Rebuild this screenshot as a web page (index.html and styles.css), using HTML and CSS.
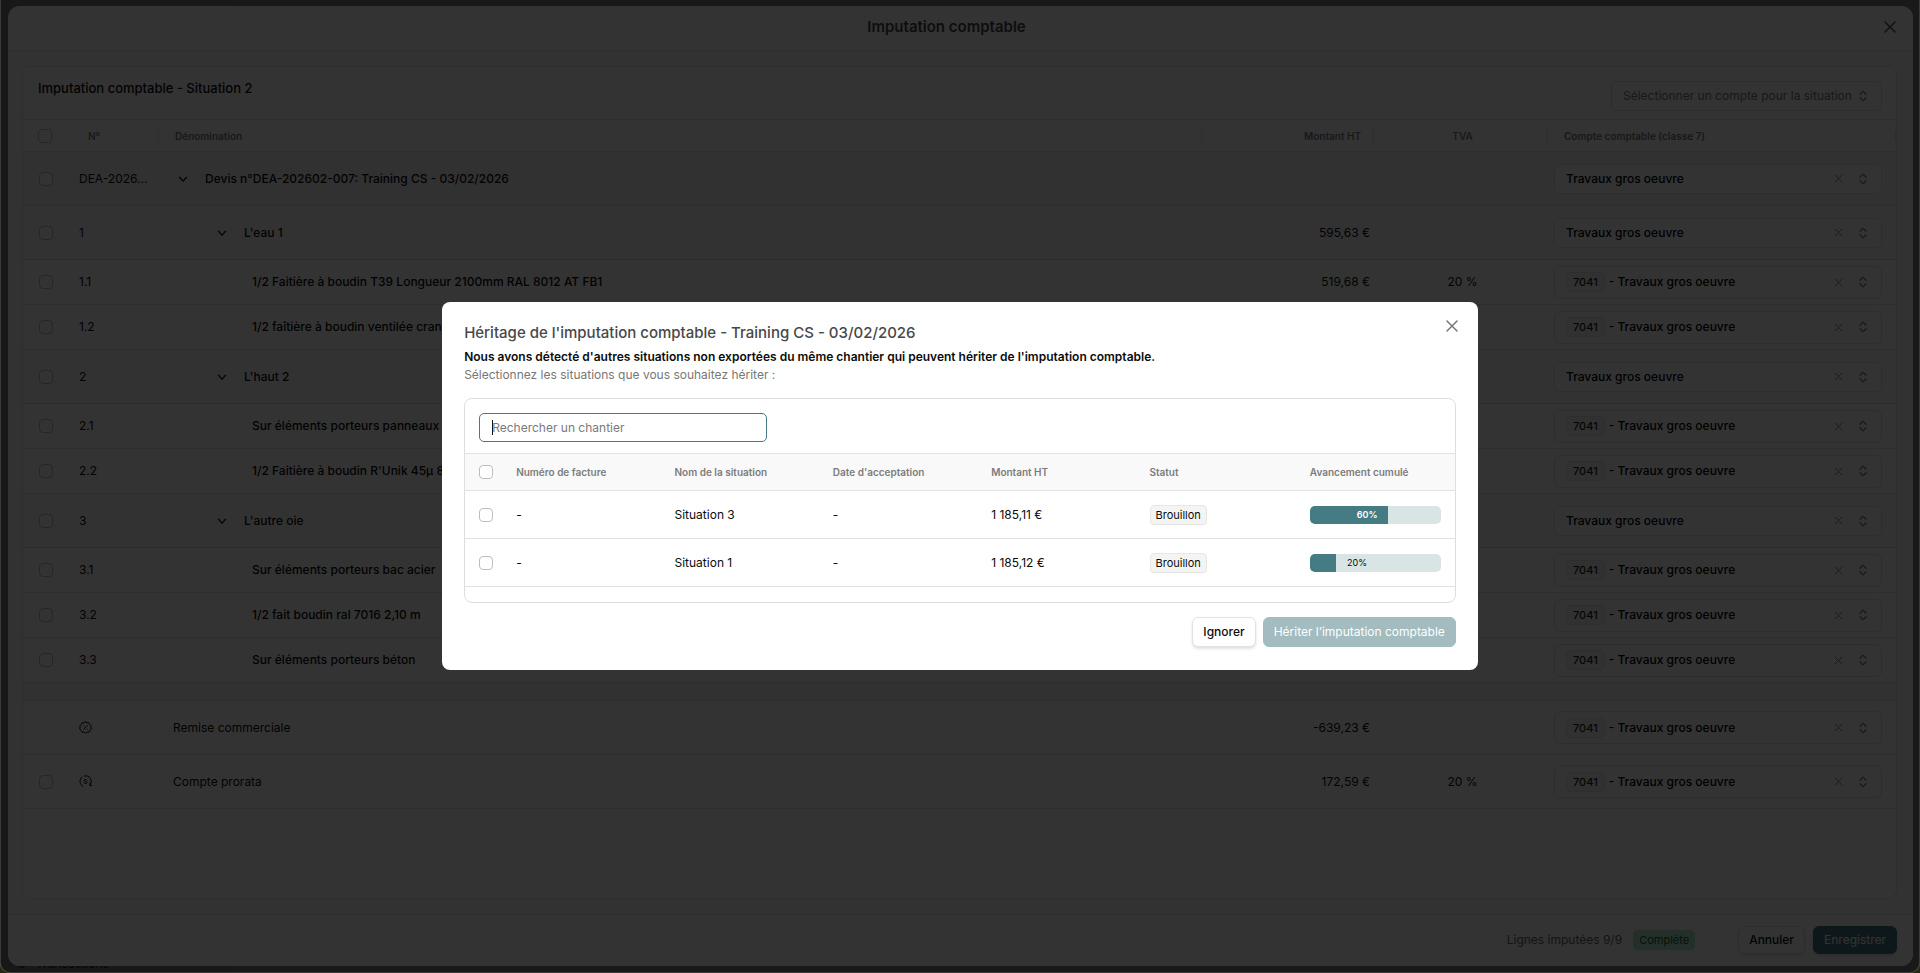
FILE: index.html
```html
<!DOCTYPE html>
<html lang="fr">
<head>
<meta charset="utf-8">
<title>Imputation comptable</title>
<link rel="stylesheet" href="styles.css">
</head>
<body>
<svg class="sprite" aria-hidden="true">
  <symbol id="i-close" viewBox="0 0 16 16"><path d="M3 3l10 10M13 3L3 13"/></symbol>
  <symbol id="i-down" viewBox="0 0 16 16"><path d="M4 6l4 4.500L12 6"/></symbol>
  <symbol id="i-sort" viewBox="0 0 16 16"><path d="M4.500 6L8 2.500 11.500 6M4.500 10L8 13.500 11.500 10"/></symbol>
  <symbol id="i-percent" viewBox="0 0 16 16"><path d="M8 1l2 1.200 2.300.1 1 2.100 1.800 1.500-.5 2.100.5 2.100-1.800 1.500-1 2.100-2.300.1L8 15l-2-1.200-2.300-.1-1-2.100L.9 10.100 1.400 8 .9 5.900l1.800-1.500 1-2.100L6 2.200zM10.200 5.800l-4.400 4.400M6 6h.1M10 10h.1"/></symbol>
  <symbol id="i-coin" viewBox="0 0 16 16"><path d="M5 14.200A6.900 6.900 0 0 1 3.500 2.700M6.500 1.300A6.900 6.900 0 0 1 13.500 12.500M13.500 10v3h2M9.900 6.200C9.200 5.200 6.200 5.200 6.200 6.800c0 1.600 3.700.8 3.700 2.500 0 1.500-3 1.500-3.900.3"/></symbol>
</svg>

<aside class="sidebar"><a class="sidebar-link" href="#"><span class="sidebar-icon">⇅</span>Transactions</a></aside>

<section class="sheet" aria-label="Imputation comptable">
  <header class="sheet-head">
    <h1>Imputation comptable</h1>
    <button class="icon-btn" aria-label="Fermer"><svg class="icon icon-lg"><use href="#i-close"/></svg></button>
  </header>
  <div class="sheet-body">
    <div class="card">
      <div class="card-head">
        <h2>Imputation comptable - Situation 2</h2>
        <div class="picker picker-all"><select aria-label="Compte pour la situation"><option>Sélectionner un compte pour la situation</option></select><svg class="icon"><use href="#i-sort"/></svg></div>
      </div>
      <table class="lines">
        <colgroup><col class="c-check"><col class="c-num"><col><col class="c-amount"><col class="c-tva"><col class="c-account"></colgroup>
        <thead>
          <tr><th class="check"><input type="checkbox" aria-label="Tout sélectionner"></th><th class="sep num">N°</th><th class="sep name">Dénomination</th><th class="sep amount">Montant HT</th><th class="sep tva">TVA</th><th class="sep account">Compte comptable (classe 7)</th></tr>
        </thead>
        <tbody>
          <tr class="quote"><td class="check"><input type="checkbox" aria-label="Devis"></td><td>DEA-2026...</td><td class="l0"><div class="node"><button class="toggle" aria-label="Replier"><svg class="icon"><use href="#i-down"/></svg></button>Devis n°DEA-202602-007: Training CS - 03/02/2026</div></td><td class="amount"></td><td class="tva"></td><td class="account"><div class="picker"><select aria-label="Compte"><option>Travaux gros oeuvre</option></select><button class="clear" aria-label="Effacer"><svg class="icon"><use href="#i-close"/></svg></button><svg class="icon"><use href="#i-sort"/></svg></div></td></tr>
          <tr class="group"><td class="check"><input type="checkbox" aria-label="1"></td><td>1</td><td class="l1"><div class="node"><button class="toggle" aria-label="Replier"><svg class="icon"><use href="#i-down"/></svg></button>L'eau 1</div></td><td class="amount">595,63 €</td><td class="tva"></td><td class="account"><div class="picker"><select aria-label="Compte"><option>Travaux gros oeuvre</option></select><button class="clear" aria-label="Effacer"><svg class="icon"><use href="#i-close"/></svg></button><svg class="icon"><use href="#i-sort"/></svg></div></td></tr>
          <tr><td class="check"><input type="checkbox" aria-label="1.1"></td><td>1.1</td><td class="l2">1/2 Faitière à boudin T39 Longueur 2100mm RAL 8012 AT FB1</td><td class="amount">519,68 €</td><td class="tva">20 %</td><td class="account"><div class="picker coded"><span class="code">7041</span><select aria-label="Compte"><option>- Travaux gros oeuvre</option></select><button class="clear" aria-label="Effacer"><svg class="icon"><use href="#i-close"/></svg></button><svg class="icon"><use href="#i-sort"/></svg></div></td></tr>
          <tr><td class="check"><input type="checkbox" aria-label="1.2"></td><td>1.2</td><td class="l2">1/2 faîtière à boudin ventilée crantée</td><td class="amount"></td><td class="tva"></td><td class="account"><div class="picker coded"><span class="code">7041</span><select aria-label="Compte"><option>- Travaux gros oeuvre</option></select><button class="clear" aria-label="Effacer"><svg class="icon"><use href="#i-close"/></svg></button><svg class="icon"><use href="#i-sort"/></svg></div></td></tr>
          <tr class="group"><td class="check"><input type="checkbox" aria-label="2"></td><td>2</td><td class="l1"><div class="node"><button class="toggle" aria-label="Replier"><svg class="icon"><use href="#i-down"/></svg></button>L'haut 2</div></td><td class="amount"></td><td class="tva"></td><td class="account"><div class="picker"><select aria-label="Compte"><option>Travaux gros oeuvre</option></select><button class="clear" aria-label="Effacer"><svg class="icon"><use href="#i-close"/></svg></button><svg class="icon"><use href="#i-sort"/></svg></div></td></tr>
          <tr><td class="check"><input type="checkbox" aria-label="2.1"></td><td>2.1</td><td class="l2">Sur éléments porteurs panneaux bois</td><td class="amount"></td><td class="tva"></td><td class="account"><div class="picker coded"><span class="code">7041</span><select aria-label="Compte"><option>- Travaux gros oeuvre</option></select><button class="clear" aria-label="Effacer"><svg class="icon"><use href="#i-close"/></svg></button><svg class="icon"><use href="#i-sort"/></svg></div></td></tr>
          <tr><td class="check"><input type="checkbox" aria-label="2.2"></td><td>2.2</td><td class="l2">1/2 Faitière à boudin R'Unik 45µ 8012</td><td class="amount"></td><td class="tva"></td><td class="account"><div class="picker coded"><span class="code">7041</span><select aria-label="Compte"><option>- Travaux gros oeuvre</option></select><button class="clear" aria-label="Effacer"><svg class="icon"><use href="#i-close"/></svg></button><svg class="icon"><use href="#i-sort"/></svg></div></td></tr>
          <tr class="group"><td class="check"><input type="checkbox" aria-label="3"></td><td>3</td><td class="l1"><div class="node"><button class="toggle" aria-label="Replier"><svg class="icon"><use href="#i-down"/></svg></button>L'autre oie</div></td><td class="amount"></td><td class="tva"></td><td class="account"><div class="picker"><select aria-label="Compte"><option>Travaux gros oeuvre</option></select><button class="clear" aria-label="Effacer"><svg class="icon"><use href="#i-close"/></svg></button><svg class="icon"><use href="#i-sort"/></svg></div></td></tr>
          <tr><td class="check"><input type="checkbox" aria-label="3.1"></td><td>3.1</td><td class="l2">Sur éléments porteurs bac acier</td><td class="amount"></td><td class="tva"></td><td class="account"><div class="picker coded"><span class="code">7041</span><select aria-label="Compte"><option>- Travaux gros oeuvre</option></select><button class="clear" aria-label="Effacer"><svg class="icon"><use href="#i-close"/></svg></button><svg class="icon"><use href="#i-sort"/></svg></div></td></tr>
          <tr><td class="check"><input type="checkbox" aria-label="3.2"></td><td>3.2</td><td class="l2">1/2 fait boudin ral 7016 2,10 m</td><td class="amount"></td><td class="tva"></td><td class="account"><div class="picker coded"><span class="code">7041</span><select aria-label="Compte"><option>- Travaux gros oeuvre</option></select><button class="clear" aria-label="Effacer"><svg class="icon"><use href="#i-close"/></svg></button><svg class="icon"><use href="#i-sort"/></svg></div></td></tr>
          <tr><td class="check"><input type="checkbox" aria-label="3.3"></td><td>3.3</td><td class="l2">Sur éléments porteurs béton</td><td class="amount"></td><td class="tva"></td><td class="account"><div class="picker coded"><span class="code">7041</span><select aria-label="Compte"><option>- Travaux gros oeuvre</option></select><button class="clear" aria-label="Effacer"><svg class="icon"><use href="#i-close"/></svg></button><svg class="icon"><use href="#i-sort"/></svg></div></td></tr>
          <tr class="gap"><td colspan="6"></td></tr>
          <tr class="extra"><td class="check"></td><td><svg class="icon icon-md"><use href="#i-percent"/></svg></td><td class="plain">Remise commerciale</td><td class="amount">-639,23 €</td><td class="tva"></td><td class="account"><div class="picker coded"><span class="code">7041</span><select aria-label="Compte"><option>- Travaux gros oeuvre</option></select><button class="clear" aria-label="Effacer"><svg class="icon"><use href="#i-close"/></svg></button><svg class="icon"><use href="#i-sort"/></svg></div></td></tr>
          <tr class="extra"><td class="check"><input type="checkbox" aria-label="Compte prorata"></td><td><svg class="icon icon-md"><use href="#i-coin"/></svg></td><td class="plain">Compte prorata</td><td class="amount">172,59 €</td><td class="tva">20 %</td><td class="account"><div class="picker coded"><span class="code">7041</span><select aria-label="Compte"><option>- Travaux gros oeuvre</option></select><button class="clear" aria-label="Effacer"><svg class="icon"><use href="#i-close"/></svg></button><svg class="icon"><use href="#i-sort"/></svg></div></td></tr>
        </tbody>
      </table>
    </div>
  </div>
  <footer class="sheet-foot">
    <span class="count">Lignes imputées 9/9</span>
    <span class="badge badge-ok">Complète</span>
    <div class="actions">
      <button class="btn">Annuler</button>
      <button class="btn btn-primary">Enregistrer</button>
    </div>
  </footer>
</section>

<div class="overlay">
  <section class="modal" role="dialog" aria-labelledby="modal-title">
    <header class="modal-head">
      <div>
        <h2 id="modal-title">Héritage de l'imputation comptable - Training CS - 03/02/2026</h2>
        <p class="lead">Nous avons détecté d'autres situations non exportées du même chantier qui peuvent hériter de l'imputation comptable.</p>
        <p class="hint">Sélectionnez les situations que vous souhaitez hériter :</p>
      </div>
      <button class="icon-btn" aria-label="Fermer"><svg class="icon icon-lg"><use href="#i-close"/></svg></button>
    </header>
    <div class="panel">
      <div class="search"><input type="text" placeholder="Rechercher un chantier" aria-label="Rechercher un chantier" autofocus></div>
      <table class="situations">
        <colgroup><col class="s-check"><col class="s-col"><col class="s-col"><col class="s-col"><col class="s-col"><col class="s-col"><col></colgroup>
        <thead>
          <tr><th class="check"><input type="checkbox" aria-label="Tout sélectionner"></th><th>Numéro de facture</th><th>Nom de la situation</th><th>Date d'acceptation</th><th>Montant HT</th><th>Statut</th><th class="progress-cell">Avancement cumulé</th></tr>
        </thead>
        <tbody>
          <tr><td class="check"><input type="checkbox" aria-label="Situation 3"></td><td>-</td><td>Situation 3</td><td>-</td><td>1 185,11 €</td><td><span class="badge">Brouillon</span></td><td class="progress-cell"><div class="bar"><div class="fill" style="width:60%">60%</div></div></td></tr>
          <tr><td class="check"><input type="checkbox" aria-label="Situation 1"></td><td>-</td><td>Situation 1</td><td>-</td><td>1 185,12 €</td><td><span class="badge">Brouillon</span></td><td class="progress-cell"><div class="bar"><div class="fill" style="width:20%"></div><span class="bar-text">20%</span></div></td></tr>
        </tbody>
      </table>
    </div>
    <footer class="modal-foot">
      <button class="btn">Ignorer</button>
      <button class="btn btn-soft">Hériter l’imputation comptable</button>
    </footer>
  </section>
</div>
</body>
</html>
```

FILE: styles.css
```css
* { box-sizing: border-box; }

html { background: #26270f; }

body {
  margin: 0;
  min-height: 100vh;
  display: flex;
  background: #7d7d7d;
  border-radius: 0 0 10px 10px;
  color: #0c0c0c;
  font: 12px/18px Inter, "Liberation Sans", sans-serif;
}

h1, h2, p { margin: 0; }
button, input, select { font: inherit; color: inherit; margin: 0; }
button { cursor: pointer; }

.sprite { display: none; }

.icon {
  width: 14px;
  height: 14px;
  flex: none;
  fill: none;
  stroke: currentColor;
  stroke-width: 1.5;
  stroke-linecap: round;
  stroke-linejoin: round;
  display: block;
}
.icon-md { width: 13px; height: 13px; stroke-width: 1.2; }
.icon-lg { width: 16px; height: 16px; }

.icon-btn, .toggle, .clear {
  border: 0;
  background: none;
  padding: 0;
  display: flex;
}

/* App behind the sheet */
.sidebar {
  width: 232px;
  display: flex;
  align-items: flex-end;
  padding: 0 16px;
  background: #787878;
  border-radius: 0 0 0 10px;
}
.sidebar-link {
  display: flex;
  gap: 8px;
  color: #1c1c1c;
  text-decoration: none;
}
.sidebar-icon { width: 12px; }

/* Sheet */
.sheet {
  position: fixed;
  inset: 6px 7px 7px 8px;
  display: flex;
  flex-direction: column;
  background: #f8f8f8;
  border-radius: 12px;
  overflow: hidden;
}
.sheet-head {
  display: flex;
  align-items: center;
  gap: 12px;
  height: 45px;
  padding: 0 15px 3px;
  background: #fff;
  border-bottom: 1px solid #e4e4e4;
}
.sheet-head h1 {
  flex: 1;
  text-align: center;
  font-size: 15px;
  line-height: 24px;
  font-weight: 600;
  color: #484848;
}
.sheet-head .icon-btn { color: #555; }

.sheet-body {
  flex: 1;
  min-height: 0;
  padding: 15px 16px 15px 14px;
  display: flex;
}
.card {
  flex: 1;
  background: #fff;
  border: 1px solid #e4e4e4;
  border-radius: 8px;
  overflow: hidden;
}
.card-head {
  display: flex;
  justify-content: space-between;
  align-items: flex-start;
  height: 53px;
  padding: 12px 14px 0 15px;
  border-bottom: 1px solid #e4e4e4;
}
.card-head h2 {
  font-size: 13px;
  line-height: 18px;
  font-weight: 500;
}

.picker {
  display: flex;
  align-items: center;
  gap: 4px;
  height: 30px;
  padding: 0 11px;
  background: #fff;
  border: 1px solid #e2e2e2;
  border-radius: 6px;
  color: #777;
}
.picker.coded { height: 33px; }
.picker select {
  appearance: none;
  flex: 1;
  min-width: 0;
  border: 0;
  padding: 0;
  background: none;
  font-weight: 500;
  color: #000;
}
.picker .clear { margin-right: 8px; }
.picker .icon { stroke-width: 1.3; }
.picker .clear .icon { width: 11px; height: 11px; }
.picker-all select { color: #7a7a7a; font-weight: 400; }
.picker-all { margin-top: 2px; }
.code {
  padding: 0 6px;
  border: 1px solid #e4e4e4;
  border-radius: 5px;
  background: #f5f5f5;
  color: #1c1c1c;
  font-size: 11px;
  font-weight: 500;
}

input[type="checkbox"] {
  appearance: none;
  display: block;
  width: 14px;
  height: 14px;
  background: #fff;
  border: 1px solid #bdbdbd;
  border-radius: 4px;
}

table {
  width: 100%;
  border-collapse: separate;
  border-spacing: 0;
  table-layout: fixed;
}
th { text-align: left; font-size: 10px; font-weight: 600; color: #7c7c7c; }

.c-check { width: 48px; }
.c-num { width: 88px; }
.c-amount { width: 172px; }
.c-tva { width: 174px; }
.c-account { width: 348px; }

.lines th, .lines td {
  height: 45px;
  padding: 0 8px;
  border-bottom: 1px solid #e0e0e0;
}
.lines th { height: 32px; }
.lines td.check { padding-left: 16px; }
.lines th.check { padding-left: 15px; }
.lines .sep {
  background: linear-gradient(#e2e2e2, #e2e2e2) right center / 1px 12px no-repeat;
}
.lines .num { padding-left: 17px; }
.lines .name { padding-left: 16px; }
.lines .group td, .lines .quote td, .lines .extra td { height: 54px; }
.lines .quote td, .lines .gap td { background: #f5f5f5; }
.lines .group td { background: #fafafa; }
.lines .gap td { height: 18px; }
.lines td.amount { text-align: right; padding-right: 4px; }
.lines th.amount { text-align: right; padding-right: 13px; }
.lines .tva { text-align: center; padding: 0 6px 0 9px; }
.lines td.account { padding: 0 14px 0 6px; }
.lines th.account { padding-left: 16px; }
.node { display: flex; align-items: center; gap: 15px; }
.lines .l0 { padding-left: 17px; font-weight: 500; }
.lines .l1 { padding-left: 56px; font-weight: 500; }
.lines .l2 { padding-left: 93px; font-weight: 500; }
.lines .plain { padding-left: 14px; }

.sheet-foot {
  display: flex;
  align-items: center;
  justify-content: flex-end;
  gap: 11px;
  height: 52px;
  padding: 0 16px 2px;
  background: #fff;
  border-top: 1px solid #e4e4e4;
}
.count { color: #666; }
.badge {
  display: inline-block;
  padding: 0 5px;
  border: 1px solid #e6e6e4;
  border-radius: 4px;
  background: #f4f4f3;
  font-size: 11px;
}
.badge-ok { background: #b9ecca; border-color: #b9ecca; color: #12652f; }
.actions { display: flex; gap: 8px; margin-left: 32px; }

.btn {
  height: 30px;
  padding: 0 10px;
  border: 1px solid #e2e2e2;
  border-radius: 6px;
  background: #fff;
  box-shadow: 0 2px 3px rgba(0, 0, 0, .12);
  font-weight: 500;
}
.sheet-foot .btn { height: 28px; }
.btn-primary, .btn-soft { color: #fff; font-weight: 400; }
.btn-primary { background: #457b82; border-color: #457b82; }
.btn-soft { background: #a2bcc0; border-color: #a2bcc0; box-shadow: none; }

/* Dialog */
.overlay {
  position: fixed;
  inset: 0;
  display: flex;
  align-items: center;
  justify-content: center;
  background: rgba(0, 0, 0, .8);
  border: 1px solid rgba(255, 255, 255, .15);
  border-top: 0;
  border-radius: 0 0 10px 10px;
}
.modal {
  width: 54%;
  padding: 20px 22px 23px;
  border-radius: 8px;
  background: #fff;
}
.modal-head {
  display: flex;
  justify-content: space-between;
  align-items: flex-start;
}
.modal-head h2 {
  font-size: 15px;
  line-height: 22px;
  font-weight: 500;
  color: #484848;
}
.lead { margin-top: 4px; font-weight: 600; }
.hint { color: #777; }
.modal-head .icon-btn { color: #777; margin: -4px -4px 0 0; }

.panel {
  margin-top: 14px;
  padding-bottom: 15px;
  border: 1px solid #dedede;
  border-radius: 8px;
  overflow: hidden;
}
.search { padding: 14px 14px 11px; }
.search input {
  display: block;
  width: 288px;
  height: 29px;
  padding: 0 12px;
  border: 1px solid #457b82;
  border-radius: 5px;
  outline: 0;
  background: linear-gradient(#111, #111) 12px center / 1px 15px no-repeat;
  caret-color: transparent;
}
.search input::placeholder { color: #7a7a7a; }

.s-check { width: 40px; }
.s-col { width: 16%; }
.situations th, .situations td {
  height: 48px;
  padding: 0 11px;
  border-bottom: 1px solid #e2e2e2;
}
.situations th {
  height: 38px;
  background: #f9f9f9;
  border-top: 1px solid #e2e2e2;
}
.situations .check { padding: 0 0 0 14px; }
.situations .progress-cell { padding: 0 14px 0 13px; }
.bar {
  display: flex;
  align-items: center;
  height: 18px;
  border-radius: 5px;
  background: #d9e5e4;
  overflow: hidden;
  font-size: 9px;
}
.fill {
  height: 100%;
  padding-right: 11px;
  background: #457b82;
  color: #fff;
  font-weight: 600;
  text-align: right;
}
.bar .fill:empty { padding: 0; }
.bar-text { margin-left: 11px; }

.modal-foot {
  display: flex;
  justify-content: flex-end;
  gap: 7px;
  margin-top: 14px;
}
```
